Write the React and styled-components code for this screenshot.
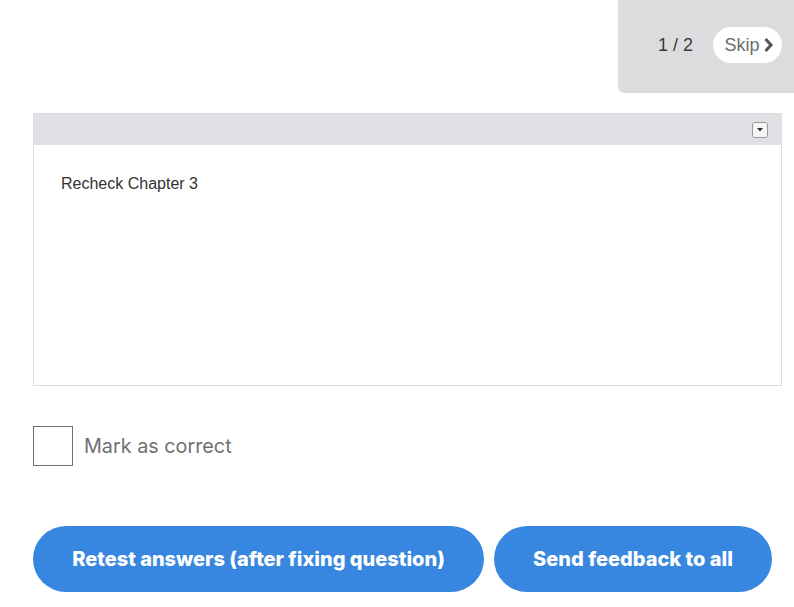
import React from 'react';
import styled, { createGlobalStyle } from 'styled-components';

const GlobalStyle = createGlobalStyle`
  html, body {
    margin: 0;
    padding: 0;
    background: #fff;
  }
  body {
    font-family: "Liberation Sans", Arial, sans-serif;
  }
`;

const Page = styled.div`
  width: 794px;
  min-height: 607px;
  overflow: hidden;
`;

const TopBar = styled.div`
  display: flex;
  justify-content: flex-end;
`;

const Counter = styled.div`
  width: 176px;
  height: 93px;
  box-sizing: border-box;
  background: #dcdcde;
  border-bottom-left-radius: 6px;
  display: flex;
  align-items: flex-start;
  justify-content: flex-end;
  gap: 20px;
  padding: 27px 12px 0 0;
`;

const Progress = styled.span`
  font-size: 18px;
  line-height: 36px;
  color: #3a3a3a;
`;

const SkipButton = styled.button`
  height: 36px;
  width: 69px;
  border: none;
  border-radius: 18px;
  background: #fff;
  color: #6b6b6b;
  font-family: "Liberation Sans", Arial, sans-serif;
  font-size: 18px;
  display: flex;
  align-items: center;
  justify-content: center;
  gap: 3px;
  padding: 0 0 0 3px;
  cursor: pointer;
`;

const Content = styled.div`
  padding: 20px 12px 0 33px;
`;

const Editor = styled.div`
  border: 1px solid #dddddd;
  height: 273px;
  box-sizing: border-box;
  display: flex;
  flex-direction: column;
`;

const EditorHeader = styled.div`
  height: 31px;
  background: #e1e1e5;
  display: flex;
  align-items: center;
  justify-content: flex-end;
  padding-right: 13px;
`;

const MenuToggle = styled.div`
  width: 16px;
  height: 16px;
  box-sizing: border-box;
  border: 1px solid #9a9a9a;
  border-radius: 3px;
  background: #f7f7f7;
  display: flex;
  align-items: center;
  justify-content: center;
  margin-top: 1px;
`;

const EditorBody = styled.div`
  padding: 30px 27px;
  font-size: 16px;
  color: #333;
`;

const CheckRow = styled.label`
  margin-top: 40px;
  display: flex;
  align-items: center;
  gap: 11px;
  font-family: Inter, sans-serif;
  font-size: 19.8px;
  color: #707070;
`;

const Box = styled.span`
  width: 40px;
  height: 40px;
  box-sizing: border-box;
  border: 1px solid #707070;
  background: #fff;
`;

const Actions = styled.div`
  margin-top: 60px;
  display: flex;
  gap: 10px;
`;

const ActionButton = styled.button`
  height: 66px;
  width: ${p => p.$width}px;
  border: none;
  border-radius: 33px;
  background: #3787e0;
  color: #fff;
  font-family: Inter, sans-serif;
  font-weight: 800;
  font-size: 20px;
  cursor: pointer;
`;

export default function App() {
  return (
    <Page>
      <GlobalStyle />
      <TopBar>
        <Counter>
          <Progress>1 / 2</Progress>
          <SkipButton>
            Skip
            <svg width="11" height="16" viewBox="0 0 11 16">
              <polyline points="2.5,2 8,8 2.5,14" fill="none" stroke="#555" strokeWidth="3" />
            </svg>
          </SkipButton>
        </Counter>
      </TopBar>
      <Content>
        <Editor>
          <EditorHeader>
            <MenuToggle>
              <svg width="6" height="4" viewBox="0 0 6 4">
                <polygon points="0,0 6,0 3,3.5" fill="#333" />
              </svg>
            </MenuToggle>
          </EditorHeader>
          <EditorBody>Recheck Chapter 3</EditorBody>
        </Editor>
        <CheckRow>
          <Box />
          Mark as correct
        </CheckRow>
        <Actions>
          <ActionButton $width={451}>Retest answers (after fixing question)</ActionButton>
          <ActionButton $width={278}>Send feedback to all</ActionButton>
        </Actions>
      </Content>
    </Page>
  );
}
